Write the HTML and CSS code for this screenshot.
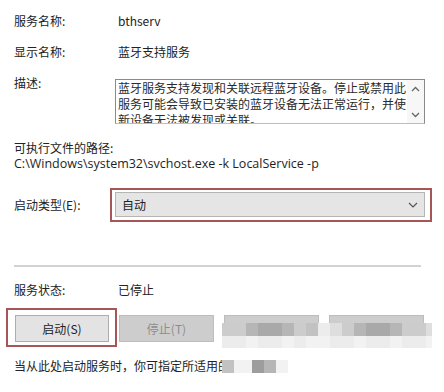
FILE: index.html
```html
<!DOCTYPE html>
<html lang="zh-CN">
<head>
<meta charset="utf-8">
<link rel="stylesheet" href="styles.css">
</head>
<body>
<div class="dialog">
  <div class="row r1"><span class="label">服务名称:</span><span class="value">bthserv</span></div>
  <div class="row r2"><span class="label">显示名称:</span><span class="value">蓝牙支持服务</span></div>
  <div class="row desc">
    <span class="label">描述:</span>
    <div class="textbox">
      <div class="tb-text">蓝牙服务支持发现和关联远程蓝牙设备。停止或禁用此服务可能会导致已安装的蓝牙设备无法正常运行，并使新设备无法被发现或关联。</div>
      <div class="tb-scroll">
        <svg class="arrow" width="9" height="6" viewBox="0 0 9 6"><path d="M1 5 L4.5 1.5 L8 5" fill="none" stroke="#666" stroke-width="1.3"/></svg>
        <svg class="arrow" width="9" height="6" viewBox="0 0 9 6"><path d="M1 1 L4.5 4.5 L8 1" fill="none" stroke="#666" stroke-width="1.3"/></svg>
      </div>
    </div>
  </div>
  <div class="path-label">可执行文件的路径:</div>
  <div class="path">C:\Windows\system32\svchost.exe -k LocalService -p</div>
  <div class="row startup">
    <span class="label short">启动类型(E):</span>
    <div class="highlight wide">
      <div class="select"><span>自动</span>
        <svg width="10" height="6" viewBox="0 0 10 6"><path d="M1 1 L5 5 L9 1" fill="none" stroke="#555" stroke-width="1.2"/></svg>
      </div>
    </div>
  </div>
  <div class="sep"></div>
  <div class="row status"><span class="label">服务状态:</span><span class="value">已停止</span></div>
  <div class="buttons">
    <div class="highlight btnwrap"><button class="btn">启动(S)</button></div>
    <button class="btn disabled b2">停止(T)</button>
    <button class="btn disabled b3">暂停(P)</button>
    <button class="btn disabled b4">恢复(R)</button>
  </div>
  <div class="hint">当从此处启动服务时，你可指定所适用的启动参数。</div>

  <div class="mosaic rowa">
    <i class="c"></i><i class="c"></i><i class="d"></i><i class="dd"></i><i class="dd"></i><i class="d"></i><i class="c"></i><i class="m"></i><i class="ll"></i><i class="l"></i><i class="c"></i><i class="d"></i><i class="dd"></i><i class="dd"></i><i class="d"></i><i class="c"></i><i class="c"></i><i class="l half"></i>
  </div>
  <div class="mosaic rowb">
    <i class="ll"></i><i class="ll"></i><i class="xl"></i><i class="ll"></i><i class="ll"></i><i class="xl"></i><i class="ll"></i><i class="xl"></i><i class="xl"></i><i class="ll"></i><i class="ll"></i><i class="xl"></i><i class="ll"></i><i class="ll"></i><i class="xl"></i><i class="ll"></i><i class="ll"></i><i class="xl half"></i>
  </div>
  <div class="mosaic rowc">
    <i class="m"></i><i class="xl wide18"></i><i class="dk"></i><i class="d"></i><i class="xl"></i><i class="wh wide150"></i>
  </div>
</div>
</body>
</html>
```

FILE: styles.css
```css
html, body {
  margin: 0;
  padding: 0;
  background: #fff;
}
body {
  width: 444px;
  height: 392px;
  overflow: hidden;
  font-family: "Noto Sans CJK SC", "Noto Sans", sans-serif;
  font-size: 12px;
  color: #222;
}
.dialog {
  position: relative;
  height: 392px;
  box-sizing: border-box;
  padding: 13px 12px 0 14px;
}
.row {
  display: flex;
  align-items: center;
  line-height: 16px;
}
.label {
  width: 104px;
  flex: none;
}
.label.short {
  width: 96px;
}
.value {
  white-space: nowrap;
}
.r2 { margin-top: 15px; }
.desc {
  margin-top: 15px;
  align-items: flex-start;
}
.textbox {
  margin-top: 4px;
  width: 310px;
  height: 45px;
  box-sizing: border-box;
  border: 1px solid #8a8a8a;
  border-bottom-color: #bdbdbd;
  display: flex;
  overflow: hidden;
  margin-left: -3px;
}
.tb-text {
  flex: 1;
  padding: 0 0 0 2px;
  line-height: 16px;
  color: #2a2a2a;
  overflow: hidden;
}
.tb-scroll {
  width: 17px;
  flex: none;
  display: flex;
  flex-direction: column;
  justify-content: space-between;
  align-items: center;
  padding: 6px 0 5px;
  box-sizing: border-box;
  background: #f7f7f7;
}
.arrow { display: block; }
.path-label {
  margin-top: 16px;
  line-height: 16px;
}
.path {
  margin-top: 0;
  font-family: "Open Sans", "Noto Sans", sans-serif;
  font-size: 12.5px;
  line-height: 16px;
  color: #1e1e1e;
  white-space: nowrap;
}
.startup {
  margin-top: 16px;
}
.highlight {
  border: 2px solid #a65656;
  box-sizing: border-box;
}
.highlight.wide {
  width: 323px;
  height: 34px;
  padding: 2px 5px 3px 3px;
}
.select {
  height: 25px;
  box-sizing: border-box;
  background: #e5e5e5;
  border: 1px solid #b5b5b5;
  display: flex;
  align-items: center;
  justify-content: space-between;
  padding: 0 6px 0 6px;
  color: #222;
}
.sep {
  margin-top: 43px;
  margin-right: 11px;
  height: 2px;
  background: #d2d2d2;
}
.status {
  margin-top: 15px;
}
.buttons {
  margin-top: 10px;
  margin-left: -8px;
  display: flex;
  align-items: flex-start;
}
.btnwrap {
  width: 111px;
  height: 39px;
  padding: 5px 6px 3px 7px;
}
.btn {
  display: block;
  width: 94px;
  height: 27px;
  box-sizing: border-box;
  border: 1px solid #adadad;
  background: #e3e3e3;
  font-family: "Noto Sans CJK SC", "Noto Sans", sans-serif;
  font-size: 12px;
  color: #222;
  padding: 0;
  margin: 0;
}
.btn.disabled {
  background: #cdcdcd;
  border-color: #bdbdbd;
  color: #8e8e8e;
  margin-top: 7px;
  width: 95px;
}
.b2 { margin-left: 2px; }
.b3 { margin-left: 10px; }
.b4 { margin-left: 10px; }
.hint {
  margin-top: 11px;
  line-height: 16px;
  white-space: nowrap;
  overflow: hidden;
  width: 222px;
}
.mosaic {
  position: absolute;
  left: 222px;
  display: flex;
}
.mosaic i {
  display: block;
  width: 12px;
  height: 13px;
}
.mosaic i.half { width: 6px; }
.rowa { top: 323px; }
.rowb { top: 336px; }
.rowb i { height: 12px; }
.rowc { top: 360px; }
.rowc i.wide18 { width: 18px; }
.rowc i.wide150 { width: 150px; }
.c { background: #cccccc; }
.d { background: #b6b6b6; }
.dd { background: #a9a9a9; }
.dk { background: #9d9d9d; }
.m { background: #c2c2c2; }
.l { background: #dedede; }
.ll { background: #ececec; }
.xl { background: #f2f2f2; }
.wh { background: #ffffff; }
```
